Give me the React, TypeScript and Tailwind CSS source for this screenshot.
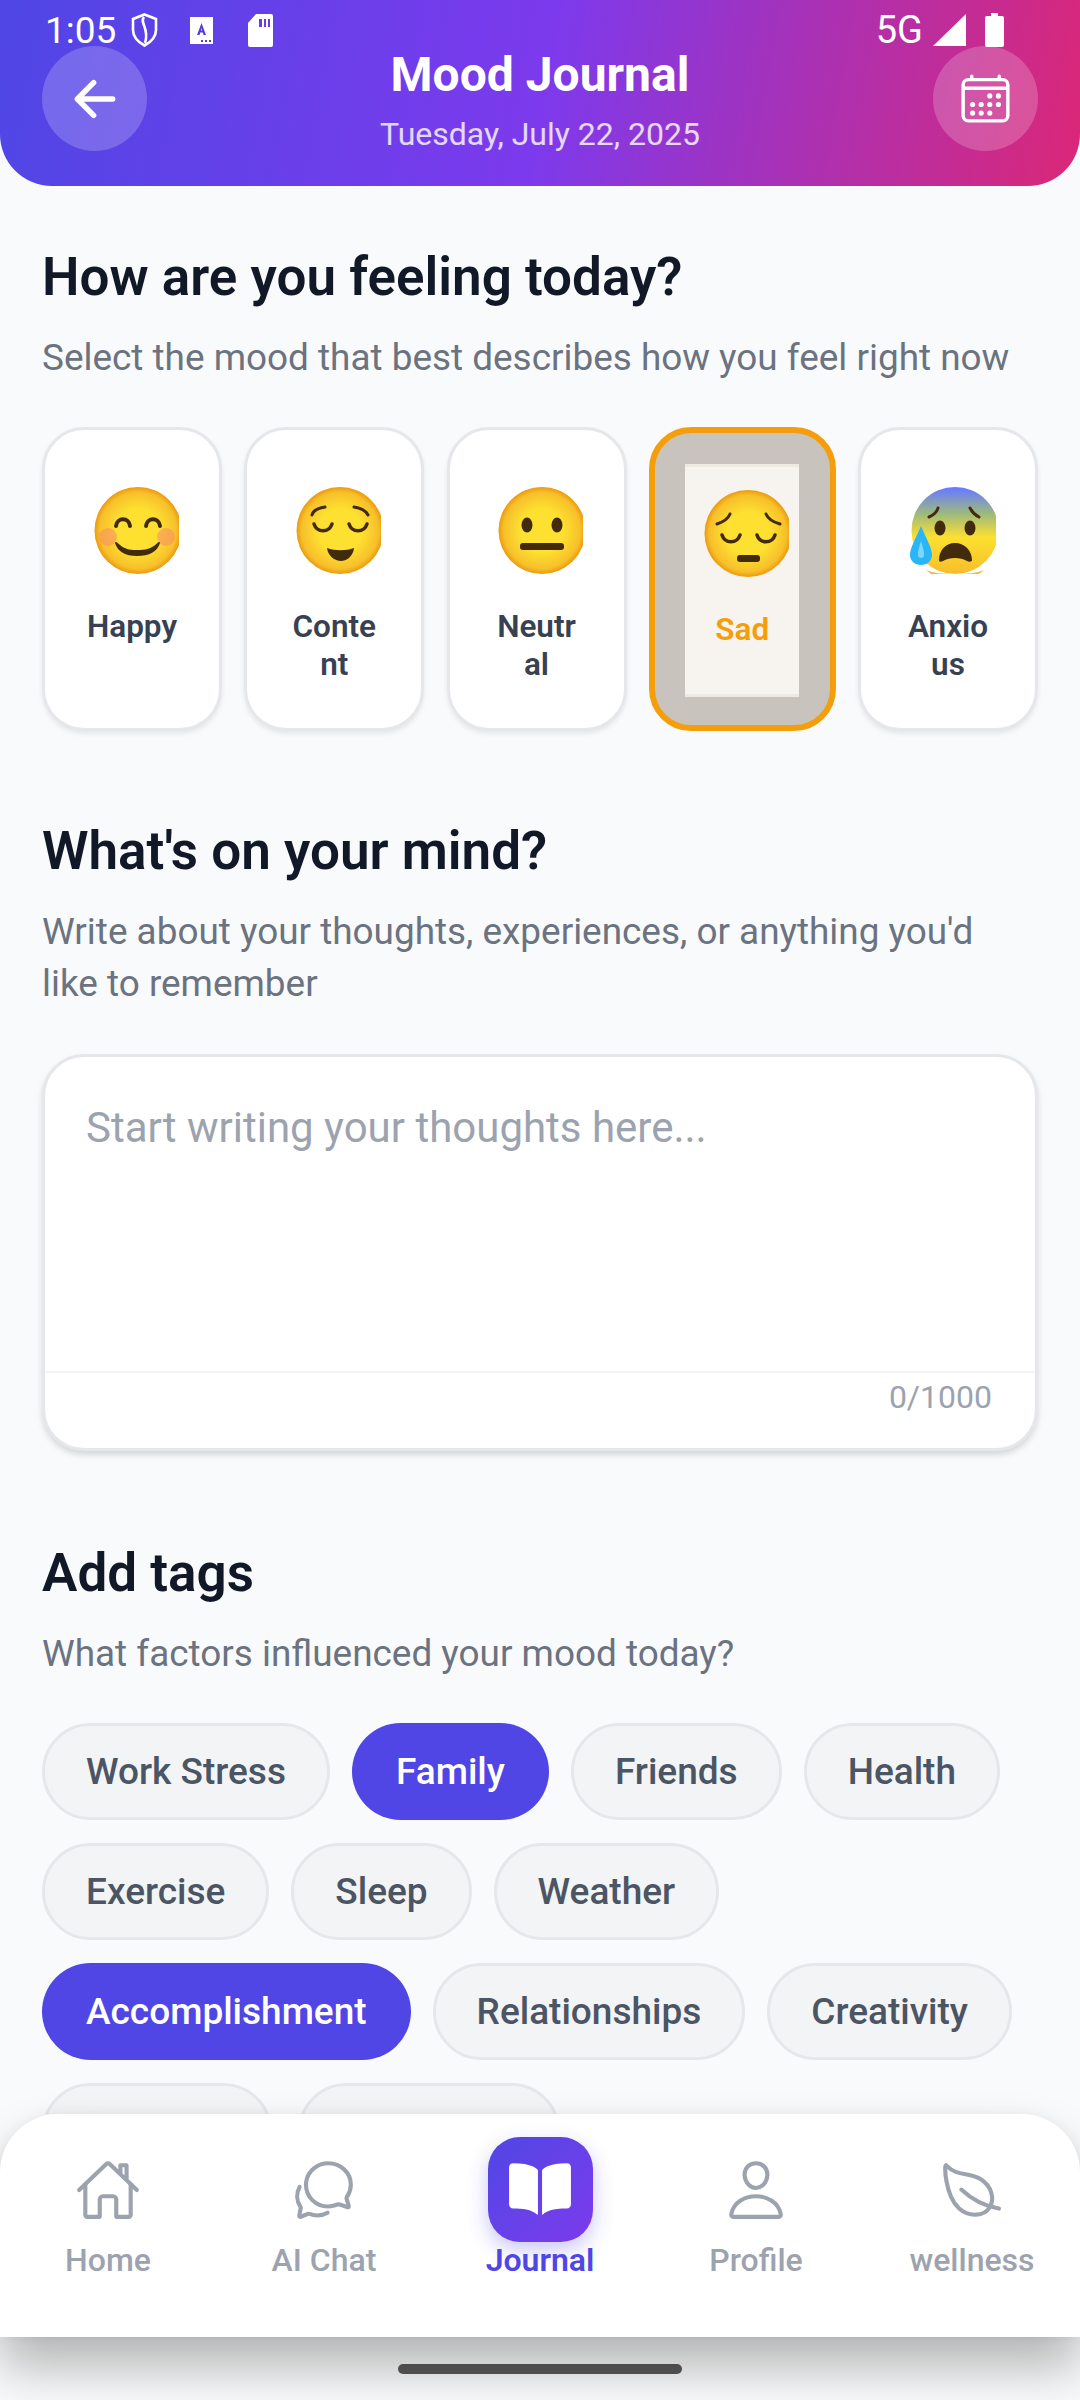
import {
  IoArrowBack,
  IoBook,
  IoCalendarOutline,
  IoChatbubblesOutline,
  IoHomeOutline,
  IoLeafOutline,
  IoPersonOutline,
} from "react-icons/io5"
import type { ReactNode } from "react"

const Face = ({ children, id, top = "#fde030" }: { children: ReactNode; id: string; top?: string }) => (
  <svg viewBox="0 0 85 87" className="w-[85px] h-[87px] mx-auto">
    <defs>
      <radialGradient id={id} cx="50%" cy="50%" r="50%">
        <stop offset="0.5" stopColor={top} />
        <stop offset="0.88" stopColor="#f7c02b" />
        <stop offset="1" stopColor="#ec9a0c" />
      </radialGradient>
    </defs>
    <circle cx="44" cy="43.500" r="43.500" fill={`url(#${id})`} />
    {children}
  </svg>
)

const dark = "#422b0d"

const HappyFace = () => (
  <Face id="happy">
    <circle cx="14" cy="50" r="9" fill="#f78a6b" opacity="0.55" />
    <circle cx="72" cy="50" r="9" fill="#f78a6b" opacity="0.55" />
    <path d="M22 39c1-9 13-9 14 0M52 39c1-9 13-9 14 0" fill="none" stroke={dark} strokeWidth="4" strokeLinecap="round" />
    <path d="M22 56c8 8 14 8 21 8s14 0 22-8c-3 9-11 12-22 12s-18-3-21-12z" fill={dark} stroke={dark} strokeWidth="2" strokeLinejoin="round" />
  </Face>
)

const ContentFace = () => (
  <Face id="content">
    <path d="M16 28c1-4 6-7 13-8M58 20c7 1 12 4 14 8" fill="none" stroke={dark} strokeWidth="3" strokeLinecap="round" />
    <path d="M18 37c3 9 15 9 18 0M53 37c3 9 15 9 18 0" fill="none" stroke={dark} strokeWidth="3.500" strokeLinecap="round" />
    <path d="M31 61c8 3 19 3 27 0-1 9-8 13-13 13s-13-4-14-13z" fill={dark} />
  </Face>
)

const NeutralFace = () => (
  <Face id="neutral">
    <ellipse cx="29" cy="38" rx="5.500" ry="7.500" fill={dark} />
    <ellipse cx="59" cy="38" rx="5.500" ry="7.500" fill={dark} />
    <rect x="22" y="56" width="44" height="7" rx="3" fill={dark} />
  </Face>
)

const SadFace = () => (
  <Face id="sad">
    <path d="M13 34c6-2 11-5 13-10M62 24c2 5 7 8 14 10" fill="none" stroke={dark} strokeWidth="3" strokeLinecap="round" />
    <path d="M18 45c3 9 15 9 18 0M53 45c3 9 15 9 18 0" fill="none" stroke={dark} strokeWidth="3.500" strokeLinecap="round" />
    <rect x="33" y="65" width="23" height="7" rx="3" fill={dark} />
  </Face>
)

const AnxiousFace = () => (
  <svg viewBox="-2 0 87 87" className="w-[87px] h-[87px] mx-auto -translate-x-px">
    <defs>
      <linearGradient id="anxious" x1="0" y1="0" x2="0" y2="1">
        <stop offset="0.02" stopColor="#6a7bff" />
        <stop offset="0.3" stopColor="#9bb87f" />
        <stop offset="0.58" stopColor="#fde030" />
        <stop offset="0.97" stopColor="#f7c02b" />
      </linearGradient>
      <clipPath id="anxiousClip">
        <rect x="-2" y="0" width="87" height="87" />
      </clipPath>
    </defs>
    <g clipPath="url(#anxiousClip)">
      <circle cx="44" cy="43.500" r="43.500" fill="url(#anxious)" />
      <path d="M15 83a43 43 0 0 0 58 0c-8 3-16 4-29 4s-21-1-29-4z" fill="#ec9a0c" opacity="0.7" />
    </g>
    <path d="M18 30c5-2 8-5 9-9M59 21c2 4 5 7 9 9" fill="none" stroke={dark} strokeWidth="3" strokeLinecap="round" />
    <ellipse cx="29" cy="41" rx="5.500" ry="7.500" fill={dark} />
    <ellipse cx="59" cy="41" rx="5.500" ry="7.500" fill={dark} />
    <path d="M28 73c0-10 7-17 16-17s17 7 17 17c0 2-3 2-5 1-3-2-8-3-12-3s-9 1-12 3c-2 1-4 1-4-1z" fill={dark} />
    <path d="M10 39c-6 14-11 22-11 29 0 6 5 10 11 10s11-4 11-10c0-7-5-15-11-29z" fill="#29b6f6" />
    <path d="M10 54c-2 6-3 10-3 13 0 3 1 4 3 4s3-1 3-4c0-3-1-7-3-13z" fill="#81d4fa" />
  </svg>
)

const moods = [
  { label: "Happy", face: <HappyFace /> },
  { label: "Conte\nnt", face: <ContentFace /> },
  { label: "Neutr\nal", face: <NeutralFace /> },
  { label: "Sad", face: <SadFace />, selected: true },
  { label: "Anxio\nus", face: <AnxiousFace /> },
]

const tagRows = [
  [
    { label: "Work Stress" },
    { label: "Family", on: true },
    { label: "Friends" },
    { label: "Health" },
  ],
  [{ label: "Exercise" }, { label: "Sleep" }, { label: "Weather" }],
  [{ label: "Accomplishment", on: true }, { label: "Relationships" }, { label: "Creativity" }],
]

const navItems = [
  { label: "Home", Icon: IoHomeOutline, size: 66 },
  { label: "AI Chat", Icon: IoChatbubblesOutline, size: 66 },
  { label: "Journal", Icon: IoBook, size: 66, active: true },
  { label: "Profile", Icon: IoPersonOutline, size: 66 },
  { label: "wellness", Icon: IoLeafOutline, size: 66 },
]

const StatusBar = () => (
  <div className="absolute inset-x-0 top-0 h-[60px] text-white">
    <div className="flex items-center h-full pl-[45px] pr-[76px]">
      <span className="text-[37px] leading-none w-[86px]">1:05</span>
      <svg viewBox="0 0 27 34" className="w-[27px] h-[34px]">
        <path d="M13.500 1.500 25 6v11c0 7-5 12-11.500 15.500C7 29 2 24 2 17V6z" fill="none" stroke="white" strokeWidth="2.600" />
        <path d="M13 4c-5 6 6 11 1 26" fill="none" stroke="white" strokeWidth="2.600" />
      </svg>
      <svg viewBox="0 0 23 27" className="w-[23px] h-[27px] ml-[32px]">
        <path d="M0 0h23v27H0z" fill="white" />
        <path d="M11.500 6 7 18h2.500l.8-2.500h2.500l.8 2.500H16zM10.900 13.500l.6-2.500.6 2.500z" fill="#4f3fd8" fillRule="evenodd" />
        <path d="M11 23h2v2h-2zM15 23h2v2h-2zM19 23h2v2h-2z" fill="#4f3fd8" />
      </svg>
      <svg viewBox="0 0 25 33" className="w-[25px] h-[33px] ml-[35px]">
        <path d="M8 0h15a2 2 0 0 1 2 2v29a2 2 0 0 1-2 2H2a2 2 0 0 1-2-2V9z" fill="white" />
        <path d="M11 5h3v8h-3zM16 5h2v8h-2zM20 5h2v8h-2z" fill="#6a3be6" />
      </svg>
      <span className="text-[38px] leading-none ml-auto">5G</span>
      <svg viewBox="0 0 33 32" className="w-[33px] h-[32px] ml-[10px]">
        <path d="M33 0v32H0z" fill="white" />
      </svg>
      <svg viewBox="0 0 19 34" className="w-[19px] h-[34px] ml-[19px]">
        <path d="M6 0h7v3h4a2 2 0 0 1 2 2v27a2 2 0 0 1-2 2H2a2 2 0 0 1-2-2V5a2 2 0 0 1 2-2h4z" fill="white" />
      </svg>
    </div>
  </div>
)

const App = () => {
  return (
    <div className="w-[1080px] h-[2400px] flex flex-col overflow-hidden bg-[#f9fafb] font-['Roboto',sans-serif]">
      <header className="relative h-[186px] shrink-0 rounded-b-[52px] bg-[linear-gradient(100deg,#4f46e5,#7c3aed_50%,#db2777)] px-[42px] pt-[46px] flex justify-between">
        <StatusBar />
        <button className="w-[105px] h-[105px] rounded-full bg-white/20 flex items-center justify-center text-white">
          <IoArrowBack size={58} />
        </button>
        <div className="text-center text-white">
          <h1 className="text-[48px] leading-[58px] font-bold">Mood Journal</h1>
          <p className="text-[32px] leading-[44px] mt-[8px] text-white/80">Tuesday, July 22, 2025</p>
        </div>
        <button className="w-[105px] h-[105px] rounded-full bg-white/20 flex items-center justify-center text-white">
          <IoCalendarOutline size={55} />
        </button>
      </header>

      <main className="flex-1 overflow-hidden px-[42px]">
        <h2 className="mt-[57px] text-[53px] leading-[68px] font-semibold text-[#111827]">How are you feeling today?</h2>
        <p className="mt-[21px] text-[36.900px] leading-[52px] text-[#6b7280]">Select the mood that best describes how you feel right now</p>

        <div className="mt-[43px] flex justify-between w-[996px]">
          {moods.map((m) =>
            m.selected ? (
              <div key={m.label} className="w-[187px] h-[304px] rounded-[42px] border-[6px] border-[#f59e0b] bg-[#c8c3bc] pt-[2px] flex justify-center items-center">
                <div className="w-[114px] h-[233px] bg-[#f7f3ee] border-y-[3px] border-[#efe9e2] pt-[23px] text-center">
                  <div className="w-[85px] mx-auto translate-x-[4px]">{m.face}</div>
                  <div className="mt-[34px] text-[31.500px] leading-[38px] font-semibold text-[#f59e0b]">{m.label}</div>
                </div>
              </div>
            ) : (
              <div key={m.label} className="w-[180px] h-[304px] rounded-[42px] border-[3px] border-[#e5e7eb] bg-white pt-[57px] text-center shadow-[0_3px_5px_rgba(0,0,0,0.08)]">
                <div className="w-[85px] mx-auto translate-x-[4px]">{m.face}</div>
                <div className="mt-[34px] text-[31.500px] leading-[38px] font-semibold text-[#374151] whitespace-pre-line">{m.label}</div>
              </div>
            )
          )}
        </div>

        <h2 className="mt-[86px] text-[53px] leading-[68px] font-semibold text-[#111827]">What's on your mind?</h2>
        <p className="mt-[21px] text-[36.900px] leading-[52px] text-[#6b7280]">Write about your thoughts, experiences, or anything you'd<br />like to remember</p>

        <div className="mt-[44px] w-[996px] h-[397px] rounded-[42px] border-[3px] border-[#e5e7eb] bg-white flex flex-col shadow-[0_4px_6px_rgba(0,0,0,0.14)]">
          <div className="h-[316px] border-b-[2px] border-[#f3f4f6] px-[41px] pt-[45px] text-[42px] leading-[52px] text-[#9ca3af]">Start writing your thoughts here...</div>
          <div className="text-right pr-[43px] pt-[4px] text-[32px] leading-[40px] text-[#9ca3af]">0/1000</div>
        </div>

        <h2 className="mt-[88px] text-[53px] leading-[68px] font-semibold text-[#111827]">Add tags</h2>
        <p className="mt-[21px] text-[36.900px] leading-[52px] text-[#6b7280]">What factors influenced your mood today?</p>

        <div className="mt-[43px] flex flex-col gap-[23px]">
          {tagRows.map((row, i) => (
            <div key={i} className="flex gap-[22px]">
              {row.map((t) => (
                <div
                  key={t.label}
                  className={
                    t.on
                      ? "h-[97px] px-[44px] rounded-full bg-[#4f46e5] text-white text-[37px] font-medium flex items-center"
                      : "h-[97px] px-[41px] rounded-full border-[3px] border-[#e5e7eb] bg-[#f3f4f6] text-[#4b5563] text-[37px] font-medium flex items-center"
                  }
                >
                  {t.label}
                </div>
              ))}
            </div>
          ))}
          <div className="flex gap-[26px]">
            <div className="w-[230px] h-[97px] rounded-full border-[3px] border-[#e5e7eb] bg-[#f3f4f6]" />
            <div className="w-[262px] h-[97px] rounded-full border-[3px] border-[#e5e7eb] bg-[#f3f4f6]" />
          </div>
        </div>
      </main>

      <nav className="relative h-[223px] shrink-0 rounded-t-[58px] bg-white grid grid-cols-5 shadow-[0_30px_50px_rgba(0,0,0,0.28),0_0_12px_rgba(0,0,0,0.05)]">
        {navItems.map(({ label, Icon, size, active }) => (
          <div key={label} className="flex flex-col items-center pt-[23px]">
            {active ? (
              <div className="w-[105px] h-[105px] rounded-[32px] bg-gradient-to-br from-[#4f46e5] to-[#7c3aed] flex items-center justify-center text-white shadow-[0_8px_20px_rgba(79,70,229,0.3)]">
                <Icon size={size} />
              </div>
            ) : (
              <div className="w-[105px] h-[105px] flex items-center justify-center text-[#9ca3af]">
                <Icon size={size} />
              </div>
            )}
            <span className={active ? "-mt-[1px] text-[32px] leading-[38px] font-semibold text-[#4f46e5]" : "-mt-[1px] text-[32px] leading-[38px] font-medium text-[#9ca3af]"}>{label}</span>
          </div>
        ))}
      </nav>

      <div className="h-[63px] shrink-0 flex justify-center pt-[27px]">
        <div className="w-[284px] h-[10px] rounded-full bg-[#595959]" />
      </div>
    </div>
  )
}

export default App
